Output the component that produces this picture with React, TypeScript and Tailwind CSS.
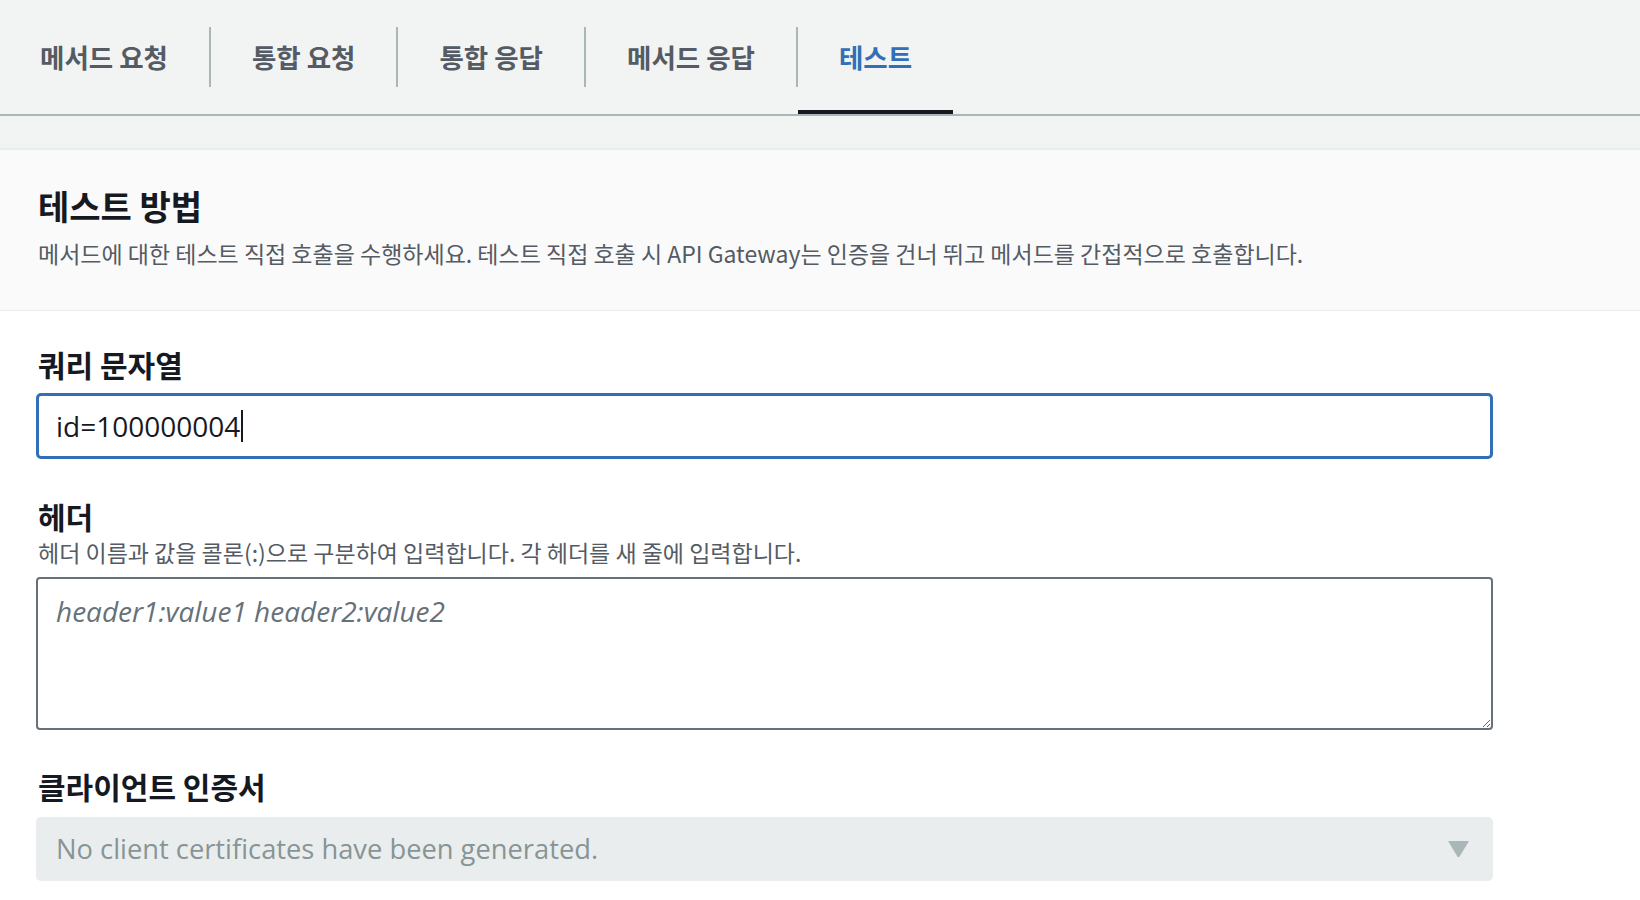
import React from 'react';

const tabs = [
    { label: '메서드 요청', active: false },
    { label: '통합 요청', active: false },
    { label: '통합 응답', active: false },
    { label: '메서드 응답', active: false },
    { label: '테스트', active: true },
];

const kr = "font-['Noto_Sans_CJK_KR',sans-serif]";

const App: React.FC = () => {
    return (
        <div className="min-h-screen bg-white">
            {/* tab bar */}
            <div className="flex h-[116px] items-center border-b-2 border-[#aab7b8] bg-[#f2f3f3]">
                {tabs.map((tab, i) => (
                    <React.Fragment key={tab.label}>
                        {i > 0 && <span className="h-[60px] w-[2px] bg-[#aab7b8]" />}
                        <div
                            className={`${kr} flex h-full items-center text-[26.5px] font-bold ${i === 0 ? 'pl-[40px] pr-[41px]' : 'px-[41px]'} ${tab.active ? 'text-[#3170b6] shadow-[inset_0_-4px_0_#16191f]' : 'text-[#545b64]'}`}
                        >
                            {tab.label}
                        </div>
                    </React.Fragment>
                ))}
            </div>
            <div className="h-[32px] bg-[#f2f3f3]" />

            {/* description panel */}
            <div className={`${kr} border-t-2 border-b border-[#eaeded] bg-[#fafafa] px-[38px] pt-[35px] pb-[42px]`}>
                <h2 className="text-[34px] font-bold leading-[42px] text-[#16191f]">테스트 방법</h2>
                <p className="mt-[11px] text-[23px] leading-[30px] text-[#545b64]">
                    메서드에 대한 테스트 직접 호출을 수행하세요. 테스트 직접 호출 시 API Gateway는 인증을 건너 뛰고 메서드를 간접적으로 호출합니다.
                </p>
            </div>

            {/* form */}
            <div className="w-[1493px] pl-[36px]">
                <label className={`${kr} mt-[35px] block pl-[2px] text-[30px] font-bold leading-[36px] text-[#16191f]`}>쿼리 문자열</label>
                <div className="mt-[11px] flex h-[66px] items-center rounded-[5px] border-[3px] border-[#3170b6] pl-[17px] font-['Open_Sans',sans-serif] text-[28px] text-[#16191f]">
                    <span>id=100000004</span>
                    <span className="ml-px inline-block h-[32px] w-[2px] bg-[#16191f]" />
                </div>

                <label className={`${kr} mt-[39px] block pl-[2px] text-[30px] font-bold leading-[36px] text-[#16191f]`}>헤더</label>
                <p className={`${kr} mt-[3px] pl-[2px] text-[23px] leading-[30px] text-[#545b64]`}>
                    헤더 이름과 값을 콜론(:)으로 구분하여 입력합니다. 각 헤더를 새 줄에 입력합니다.
                </p>
                <textarea
                    className="mt-[10px] block h-[153px] w-full rounded-[4px] border-2 border-[#687078] bg-white px-[18px] pt-[11px] font-['Open_Sans',sans-serif] text-[28px] text-[#16191f] outline-none placeholder:italic placeholder:text-[#687078]"
                    placeholder="header1:value1 header2:value2"
                />

                <label className={`${kr} mt-[38px] block pl-[2px] text-[30px] font-bold leading-[36px] text-[#16191f]`}>클라이언트 인증서</label>
                <div className="mt-[13px] flex h-[64px] items-center justify-between rounded-[5px] bg-[#eaeded] pl-[20px] pr-[23px] font-['Open_Sans',sans-serif] text-[27.3px] text-[#879596]">
                    <span>No client certificates have been generated.</span>
                    <svg width="23" height="18" viewBox="0 0 23 18">
                        <path d="M1 1 L22 1 L12.8 16.2 Q11.5 18 10.2 16.2 Z" fill="#aab7b8" />
                    </svg>
                </div>
            </div>
        </div>
    );
};

export default App;
